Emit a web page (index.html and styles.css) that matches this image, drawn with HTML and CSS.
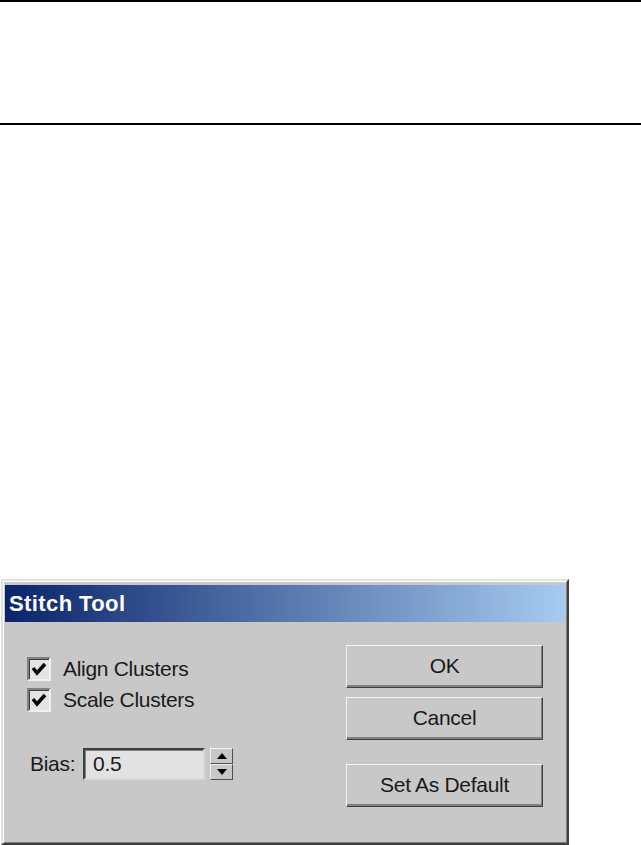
FILE: index.html
```html
<!DOCTYPE html>
<html lang="en">
<head>
  <meta charset="UTF-8" />
  <meta name="viewport" content="width=device-width, initial-scale=1.0"/>
  <title>Stitch Tool</title>
  <link rel="stylesheet" href="styles.css">
</head>
<body>
  <div class="header-band"></div>

  <div class="dialog">
    <div class="title-bar">Stitch Tool</div>

    <div class="dialog-body">
      <div class="options">
        <label class="check-row">
          <span class="check-box">
            <svg viewBox="0 0 20 20" width="20" height="20"><polyline points="4,9 8,14 16,5" fill="none" stroke="#000" stroke-width="3.5"/></svg>
          </span>
          Align Clusters
        </label>
        <label class="check-row">
          <span class="check-box">
            <svg viewBox="0 0 20 20" width="20" height="20"><polyline points="4,9 8,14 16,5" fill="none" stroke="#000" stroke-width="3.5"/></svg>
          </span>
          Scale Clusters
        </label>

        <div class="bias-row">
          <span class="bias-label">Bias:</span>
          <div class="bias-field">0.5</div>
          <div class="spinner">
            <span class="spin-half"><span class="arrow-up"></span></span>
            <span class="spin-half"><span class="arrow-down"></span></span>
          </div>
        </div>
      </div>

      <div class="buttons">
        <button class="btn">OK</button>
        <button class="btn">Cancel</button>
        <button class="btn btn-default">Set As Default</button>
      </div>
    </div>
  </div>
</body>
</html>
```

FILE: styles.css
```css
body {
  margin: 0;
  padding: 0;
  background: #fff;
  font-family: 'Liberation Sans', Arial, sans-serif;
}

.header-band {
  height: 121px;
  border-top: 2px solid #000;
  border-bottom: 2px solid #000;
}

.dialog {
  margin: 454px 0 0 1px;
  width: 568px;
  height: 266px;
  box-sizing: border-box;
  background: #c8c8c8;
  border: 2px solid;
  border-color: #e2e2e2 #404040 #404040 #e2e2e2;
  box-shadow: inset 1px 1px #fff, inset -1px -1px #808080;
  padding: 4px 2px 2px 2px;
}

.title-bar {
  height: 37px;
  line-height: 37px;
  padding-left: 4px;
  background: linear-gradient(to right, #0a246a, #a6caf0);
  color: #fff;
  font-weight: bold;
  font-size: 22px;
  letter-spacing: 0.4px;
}

.dialog-body {
  display: flex;
  justify-content: space-between;
  padding: 23px 22px 0 22px;
}

.options {
  margin-top: 12px;
  display: flex;
  flex-direction: column;
}

.check-row {
  display: flex;
  align-items: center;
  gap: 12px;
  height: 24px;
  margin-bottom: 7px;
  font-size: 21px;
  letter-spacing: -0.3px;
  color: #1a1a1a;
}

.check-box {
  width: 24px;
  height: 24px;
  box-sizing: border-box;
  background: #e4e4e4;
  border: 2px solid;
  border-color: #808080 #f2f2f2 #f2f2f2 #808080;
  box-shadow: inset 1px 1px #404040;
  display: flex;
  align-items: center;
  justify-content: center;
}

.bias-row {
  display: flex;
  align-items: center;
  margin-top: 29px;
  padding-left: 3px;
  font-size: 21px;
  letter-spacing: -0.3px;
  color: #1a1a1a;
}

.bias-label {
  width: 53px;
}

.bias-field {
  width: 122px;
  height: 32px;
  box-sizing: border-box;
  background: #e2e2e2;
  border: 2px solid;
  border-color: #404040 #d8d8d8 #d8d8d8 #404040;
  box-shadow: inset 1px 1px #808080;
  padding-left: 8px;
  line-height: 28px;
}

.spinner {
  margin-left: 5px;
  width: 23px;
  height: 32px;
  display: flex;
  flex-direction: column;
}

.spin-half {
  flex: 1;
  display: flex;
  align-items: center;
  justify-content: center;
  border: 1px solid;
  border-color: #f2f2f2 #505050 #505050 #f2f2f2;
  background: #c8c8c8;
}

.arrow-up {
  width: 0;
  height: 0;
  border-left: 5px solid transparent;
  border-right: 5px solid transparent;
  border-bottom: 6px solid #000;
}

.arrow-down {
  width: 0;
  height: 0;
  border-left: 5px solid transparent;
  border-right: 5px solid transparent;
  border-top: 6px solid #000;
}

.buttons {
  display: flex;
  flex-direction: column;
  gap: 9px;
}

.btn {
  width: 197px;
  height: 43px;
  background: #c8c8c8;
  border: 1px solid;
  border-color: #f4f4f4 #404040 #404040 #f4f4f4;
  box-shadow: inset -1px -2px #808080;
  font-family: 'Liberation Sans', Arial, sans-serif;
  font-size: 21px;
  letter-spacing: -0.3px;
  color: #1a1a1a;
  padding: 0 0 2px;
}

.btn-default {
  margin-top: 15px;
}
```
